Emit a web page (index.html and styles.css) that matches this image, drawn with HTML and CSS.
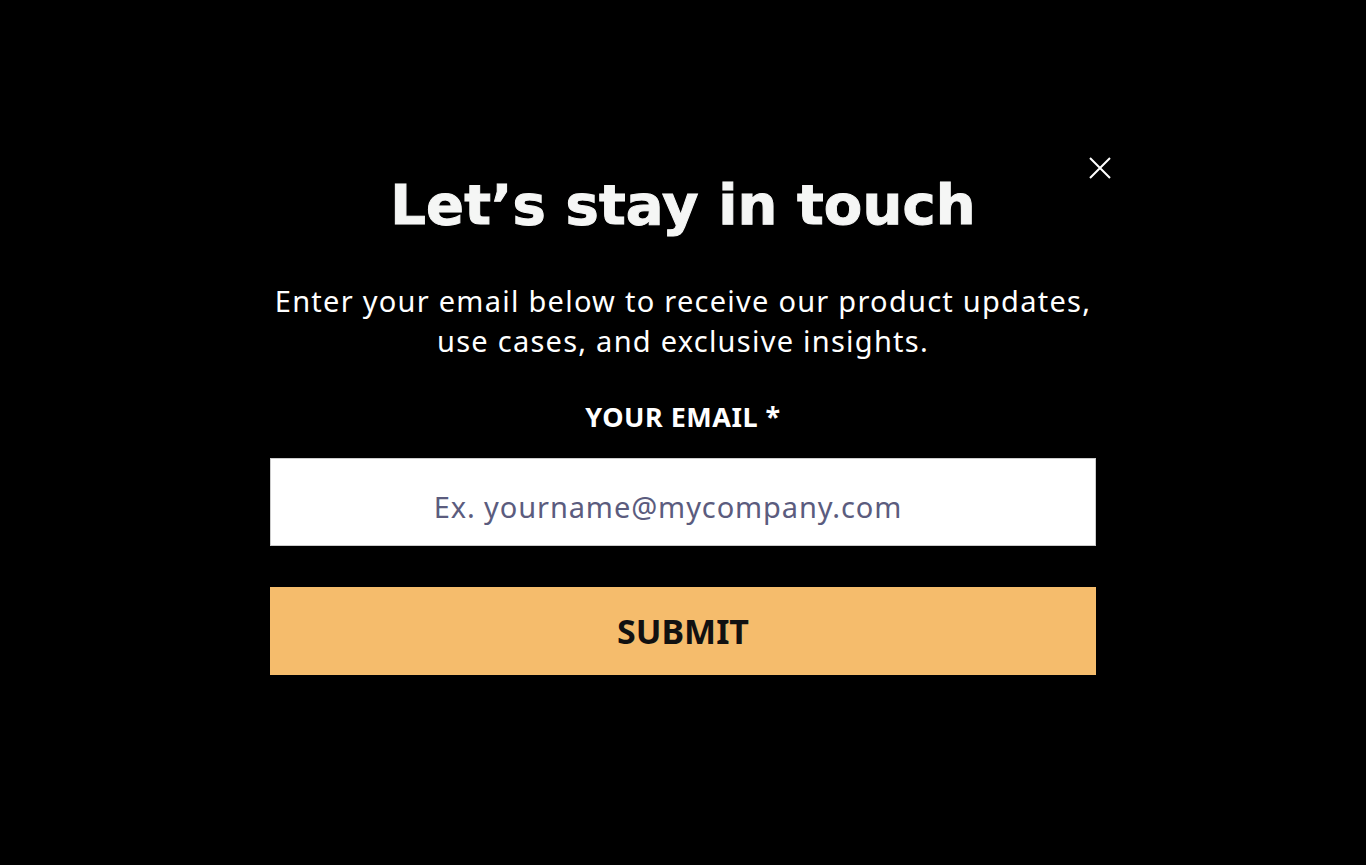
FILE: index.html
```html
<!DOCTYPE html>
<html lang="en">
<head>
<meta charset="utf-8">
<title>Let's stay in touch</title>
<link rel="stylesheet" href="styles.css">
</head>
<body>
<div class="page">
  <div class="modal">
    <button class="close" aria-label="Close">
      <svg width="22" height="22" viewBox="0 0 22 22"><path d="M1 1L21 21M21 1L1 21" stroke="#fff" stroke-width="2" fill="none"/></svg>
    </button>
    <h1 class="title">Let’s stay in touch</h1>
    <p class="lead">Enter your email below to receive our product updates,<br>use cases, and exclusive insights.</p>
    <label class="label" for="email">YOUR EMAIL *</label>
    <input class="input" id="email" type="email" placeholder="Ex. yourname@mycompany.com">
    <button class="submit">SUBMIT</button>
  </div>
</div>
</body>
</html>
```
FILE: styles.css
```css
html, body {
  margin: 0;
  padding: 0;
  background: #000;
}
.page {
  width: 1366px;
  height: 865px;
  display: flex;
  justify-content: center;
}
.modal {
  position: relative;
  width: 826px;
  padding-top: 170px;
  display: flex;
  flex-direction: column;
  align-items: center;
  font-family: "Noto Sans", sans-serif;
  color: #fff;
}
.close {
  position: absolute;
  top: 157px;
  right: -15px;
  background: none;
  border: 0;
  padding: 0;
  width: 22px;
  height: 22px;
  cursor: pointer;
}
.title {
  margin: 0;
  font-family: "DejaVu Sans", sans-serif;
  font-weight: 900;
  font-size: 56px;
  line-height: 70px;
  color: #f5f6f5;
  letter-spacing: 0.1px;
  -webkit-text-stroke: 1px #f5f6f5;
}
.lead {
  margin: 41px 0 0;
  font-size: 29px;
  line-height: 40px;
  letter-spacing: 1.25px;
  text-align: center;
  font-weight: 400;
}
.label {
  margin-top: 39px;
  font-size: 27px;
  line-height: 34px;
  letter-spacing: 0.5px;
  font-weight: 700;
}
.input {
  margin-top: 24px;
  width: 826px;
  height: 88px;
  box-sizing: border-box;
  border: 1px solid #ccc;
  background: #fff;
  font-family: "Noto Sans", sans-serif;
  font-size: 29px;
  letter-spacing: 0.9px;
  text-align: center;
  color: #333;
  outline: none;
  padding: 8px 30px 0 0;
}
.input::placeholder {
  color: #5b5c7e;
}
.submit {
  margin-top: 41px;
  width: 826px;
  height: 88px;
  border: 0;
  background: #f5bc6c;
  font-family: "Noto Sans", sans-serif;
  font-weight: 700;
  font-size: 34px;
  color: #111;
}
```
